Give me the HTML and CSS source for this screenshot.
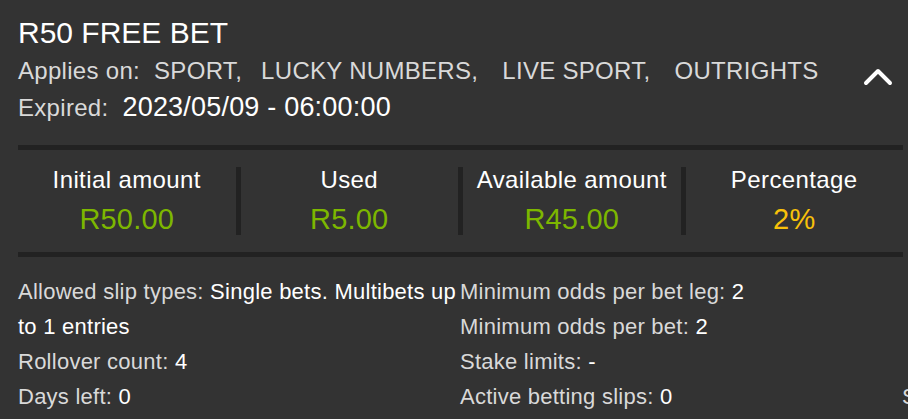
FILE: index.html
```html
<!DOCTYPE html>
<html lang="en">
<head>
<meta charset="utf-8">
<title>R50 Free Bet</title>
<link rel="stylesheet" href="styles.css">
</head>
<body>
<section class="card">
  <header class="head">
    <h1 class="title">R50 FREE BET</h1>
    <div class="applies">
      <span class="label">Applies on:</span>
      <ul class="tags">
        <li>SPORT,</li>
        <li>LUCKY NUMBERS,</li>
        <li>LIVE SPORT,</li>
        <li>OUTRIGHTS</li>
      </ul>
      <button class="toggle" aria-label="Collapse">
        <svg width="30" height="18" viewBox="0 0 30 18"><polyline points="3,15 15,3 27,15" fill="none" stroke="#fff" stroke-width="4" stroke-linecap="round" stroke-linejoin="round"/></svg>
      </button>
    </div>
    <div class="expired"><span class="label">Expired:</span><span class="date">2023/05/09 - 06:00:00</span></div>
  </header>

  <div class="stats">
    <div class="stat"><div class="stat-label">Initial amount</div><div class="stat-value">R50.00</div></div>
    <div class="stat"><div class="stat-label">Used</div><div class="stat-value">R5.00</div></div>
    <div class="stat"><div class="stat-label">Available amount</div><div class="stat-value">R45.00</div></div>
    <div class="stat"><div class="stat-label">Percentage</div><div class="stat-value stat-value--pct">2%</div></div>
  </div>

  <div class="info">
    <div class="info-item info-item--tall"><span class="label">Allowed slip types:</span> <span class="value">Single bets. Multibets up to 1 entries</span></div>
    <div class="info-item"><span class="label">Rollover count:</span> <span class="value">4</span></div>
    <div class="info-item"><span class="label">Days left:</span> <span class="value">0</span></div>
    <div class="info-item"><span class="label">Minimum odds per bet leg:</span> <span class="value">2</span></div>
    <div class="info-item"><span class="label">Minimum odds per bet:</span> <span class="value">2</span></div>
    <div class="info-item"><span class="label">Stake limits:</span> <span class="value">-</span></div>
    <div class="info-item"><span class="label">Active betting slips:</span> <span class="value">0</span></div>
    <div class="info-item info-item--extra"><span class="label">Status:</span> <span class="value">Expired</span></div>
  </div>
</section>
</body>
</html>
```

FILE: styles.css
```css
html, body {
  margin: 0;
  padding: 0;
}
body {
  background: #333333;
  color: #ffffff;
  font-family: "Liberation Sans", Arial, sans-serif;
  overflow: hidden;
  width: 908px;
  height: 419px;
}
.card {
  padding: 13px 5px 0 18px;
}
.head {
  display: flex;
  flex-direction: column;
}
.title {
  margin: 0;
  font-size: 30px;
  line-height: 40px;
  font-weight: normal;
  color: #ffffff;
}
.label {
  color: #d9d9d9;
}
.applies {
  display: flex;
  align-items: center;
  height: 36px;
  font-size: 24px;
  line-height: 36px;
  letter-spacing: 0.3px;
}
.tags {
  display: flex;
  gap: 19px;
  list-style: none;
  margin: 0 0 0 14px;
  padding: 0;
  color: #d9d9d9;
}
.tags li + li + li {
  margin-left: 5px;
}
.toggle {
  margin: 0 10px 3px auto;
  align-self: flex-end;
  background: none;
  border: 0;
  padding: 0;
  display: block;
  cursor: pointer;
}
.toggle svg {
  display: block;
}
.expired {
  font-size: 24px;
  line-height: 36px;
  height: 36px;
  letter-spacing: 0.3px;
}
.date {
  margin-left: 14px;
  font-size: 27px;
  letter-spacing: 0.2px;
  color: #ffffff;
}
.stats {
  display: flex;
  margin-top: 20px;
  padding: 17px 0;
  border-top: 5px solid #222222;
  border-bottom: 5px solid #222222;
}
.stat {
  flex: 1;
  text-align: center;
  border-right: 5px solid #222222;
}
.stat:last-child {
  border-right: 0;
}
.stat-label {
  font-size: 24px;
  line-height: 26px;
  letter-spacing: 0.4px;
  color: #ffffff;
}
.stat-value {
  margin-top: 11px;
  font-size: 29px;
  line-height: 31px;
  letter-spacing: 0.2px;
  color: #7db700;
}
.stat-value--pct {
  color: #f8c10a;
}
.info {
  margin-top: 17px;
  display: grid;
  grid-template-columns: repeat(3, 442px);
  grid-template-rows: repeat(4, 35px);
  grid-auto-flow: column;
  font-size: 22px;
  line-height: 35px;
  letter-spacing: 0.25px;
}
.info-item--tall {
  grid-row: span 2;
}
.info-item--extra {
  grid-column: 3;
  grid-row: 4;
}
.value {
  color: #ffffff;
}
```
